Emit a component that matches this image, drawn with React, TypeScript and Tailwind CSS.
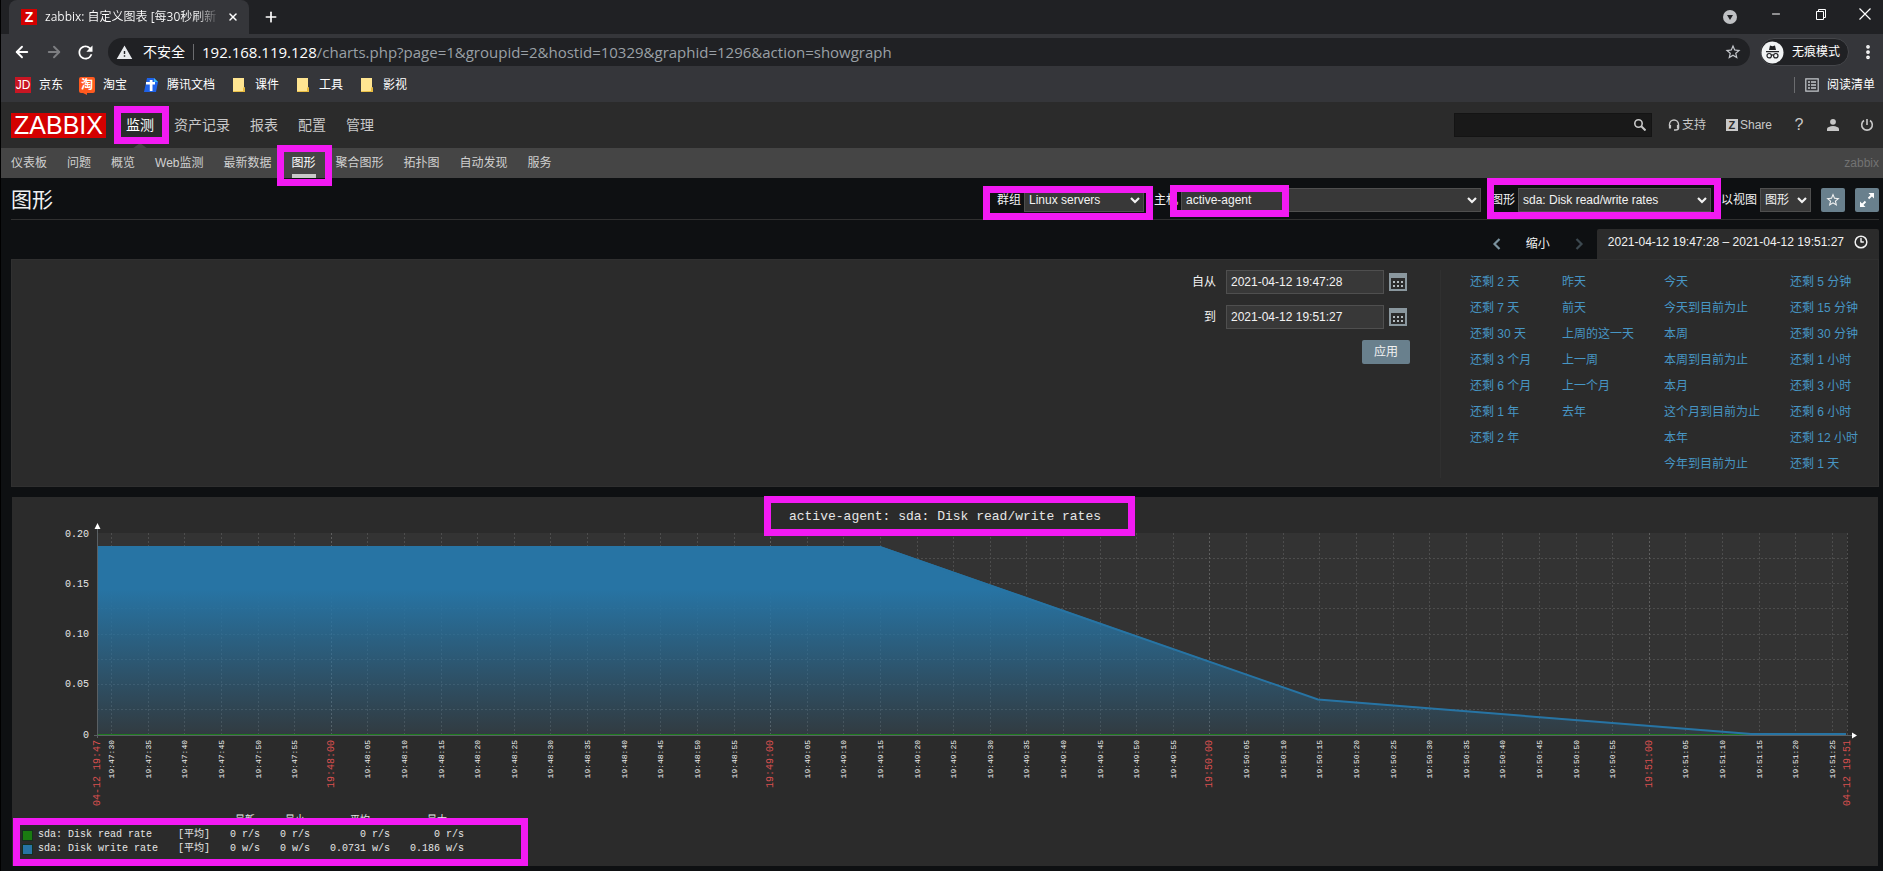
import { ArrowLeft, ArrowRight, Clock3, Minus, MoreVertical, Plus, X } from "lucide-react";
import { MdRefresh, MdStarBorder, MdWarning } from "react-icons/md";

const uiFont = "font-['Open_Sans','Noto_Sans_CJK_SC',sans-serif]";
const pageFont = "font-['Liberation_Sans','Noto_Sans_CJK_SC',sans-serif]";
const chartFont = "font-['Liberation_Mono','Noto_Sans_CJK_SC',monospace]";

const mainMenu = ["监测", "资产记录", "报表", "配置", "管理"];

const subMenu = [
  "仪表板",
  "问题",
  "概览",
  "Web监测",
  "最新数据",
  "图形",
  "聚合图形",
  "拓扑图",
  "自动发现",
  "服务",
];

const ranges = [
  {
    width: "w-[92px]",
    items: ["还剩 2 天", "还剩 7 天", "还剩 30 天", "还剩 3 个月", "还剩 6 个月", "还剩 1 年", "还剩 2 年"],
  },
  {
    width: "w-[102px]",
    items: ["昨天", "前天", "上周的这一天", "上一周", "上一个月", "去年"],
  },
  {
    width: "w-[126px]",
    items: ["今天", "今天到目前为止", "本周", "本周到目前为止", "本月", "这个月到目前为止", "本年", "今年到目前为止"],
  },
  {
    width: "w-[68px]",
    items: ["还剩 5 分钟", "还剩 15 分钟", "还剩 30 分钟", "还剩 1 小时", "还剩 3 小时", "还剩 6 小时", "还剩 12 小时", "还剩 1 天"],
  },
];

// highlight frame drawn over the page
function Mark({ className }: { className: string }) {
  return (
    <span
      aria-hidden="true"
      className={`pointer-events-none absolute z-10 border-[7px] border-[#f31af3] ${className}`}
    />
  );
}

function Folder() {
  return (
    <svg className="h-[14px] w-3" viewBox="0 0 12 14">
      <path d="M0 0h11v9l1 1v4H0z" fill="#ffe591" />
      <path d="M0 13.200V14h12v-4.500h-2V13z" fill="#e8bb3e" />
    </svg>
  );
}

function Chevron({ className, d }: { className: string; d: string }) {
  return (
    <svg className={className} viewBox="0 0 10 12" fill="none" stroke="currentColor" strokeWidth="2.200">
      <path d={d} />
    </svg>
  );
}

function TabStrip() {
  return (
    <div className="flex h-[34px] items-center justify-between bg-[#202124] pl-2 text-white">
      <div className="flex h-full items-center">
        <div className="flex h-full w-60 items-center rounded-t-lg bg-[#35363a] pl-3">
          <span className="flex size-4 shrink-0 items-center justify-center bg-[#d40000] font-['Liberation_Sans',sans-serif] text-sm font-bold leading-4">
            Z
          </span>
          <span className="ml-2 w-[176px] overflow-hidden whitespace-nowrap bg-linear-to-r from-white from-85% to-transparent bg-clip-text text-xs text-transparent">
            zabbix: 自定义图表 [每30秒刷新
          </span>
          <button aria-label="关闭标签页" className="ml-1.5">
            <X className="size-3" strokeWidth={3} />
          </button>
        </div>
        <button aria-label="新标签页" className="ml-3.5">
          <Plus className="size-4" strokeWidth={2.5} />
        </button>
      </div>
      <div className="flex h-full items-start gap-8 pr-3 pt-2">
        <svg className="mt-0.5 size-3.5" viewBox="0 0 14 14">
          <circle cx="7" cy="7" r="7" fill="#bfc1c4" />
          <path d="M4 5h6l-3 5z" fill="#202124" />
        </svg>
        <button aria-label="最小化">
          <Minus className="h-3 w-3.5" strokeWidth={2} />
        </button>
        <button aria-label="还原">
          <svg className="size-3" viewBox="0 0 12 12" fill="none" stroke="#fff">
            <path d="M1.500 3.500h7v8h-7zM3.500 3V1.500h7v8H9" />
          </svg>
        </button>
        <button aria-label="关闭">
          <svg className="size-3" viewBox="0 0 12 12" fill="none" stroke="#fff" strokeWidth="1.200">
            <path d="M.5.5l11 11M11.500.5l-11 11" />
          </svg>
        </button>
      </div>
    </div>
  );
}

function AddressBar() {
  return (
    <div className="flex items-center py-1 pl-3 pr-1.5 text-white">
      <button aria-label="后退">
        <ArrowLeft className="size-[18px]" strokeWidth={2.5} />
      </button>
      <button aria-label="前进" className="ml-3.5 text-[#7d7e81]">
        <ArrowRight className="size-[18px]" strokeWidth={2.5} />
      </button>
      <button aria-label="刷新" className="ml-3">
        <MdRefresh className="size-[21px]" />
      </button>
      <div className="ml-3 flex h-7 grow items-center rounded-full bg-[#202124] pl-2 pr-2">
        <MdWarning className="size-[17px] text-[#e8eaed]" />
        <span className="ml-2.5 text-sm leading-5">不安全</span>
        <span className="ml-2 h-4 w-px bg-[#6b6c6f]" />
        <span className="ml-2 grow text-[15px] leading-5 text-[#9aa0a6]">
          <span className="text-white">192.168.119.128</span>
          /charts.php?page=1&amp;groupid=2&amp;hostid=10329&amp;graphid=1296&amp;action=showgraph
        </span>
        <button aria-label="收藏" className="text-[#c4c7cc]">
          <MdStarBorder className="size-[18px]" />
        </button>
      </div>
      <div className="ml-2.5 flex h-7 items-center rounded-full border border-[#45464a] bg-[#202124] pr-2">
        <svg className="size-[23px]" viewBox="0 0 23 23">
          <circle cx="11.5" cy="11.5" r="11" fill="#f1f3f4" />
          <path d="M8 9l1-4.500 2.500.7 2.500-.7 1 4.500zM5 10h13v1.200H5z" fill="#202124" />
          <g fill="none" stroke="#202124" strokeWidth="1.200">
            <circle cx="8.200" cy="14.700" r="2.200" />
            <circle cx="14.800" cy="14.700" r="2.200" />
            <path d="M10.400 14.200q1.100-.8 2.200 0" />
          </g>
        </svg>
        <span className="ml-2 text-xs">无痕模式</span>
      </div>
      <button aria-label="菜单" className="ml-2.5">
        <MoreVertical className="size-[18px]" strokeWidth={3} />
      </button>
    </div>
  );
}

function Bookmarks() {
  return (
    <div className="flex h-8 items-center justify-between pb-0.5 pl-3.5 pr-2 text-xs text-white">
      <div className="flex items-center gap-4">
        <a href="#jd" className="flex items-center gap-2">
          <span className="flex size-4 items-center justify-center bg-[#c81623] font-['Liberation_Sans',sans-serif]">
            JD
          </span>
          京东
        </a>
        <a href="#taobao" className="flex items-center gap-2">
          <span className="relative flex size-4 items-center justify-center rounded-xs bg-[#ff5a1f] font-bold">
            淘
            <span className="absolute left-1 top-full border-l-4 border-t-2 border-l-transparent border-t-[#ff5a1f]" />
          </span>
          淘宝
        </a>
        <a href="#docs" className="flex items-center gap-2">
          <svg className="size-4" viewBox="0 0 16 16">
            <path d="M4 1h7l4 4-2 10H1z" fill="#1f62e8" />
            <path d="M11 1l4 4h-4z" fill="#3fb8f5" />
            <path d="M3 5h9v2.500H9.500V14H6.800V7.500H3zM6.800 3h2.700v3H6.800z" fill="#fff" />
          </svg>
          腾讯文档
        </a>
        {["课件", "工具", "影视"].map((name) => (
          <a key={name} href="#folder" className="flex items-center gap-2.5 pl-0.5">
            <Folder />
            {name}
          </a>
        ))}
      </div>
      <a href="#reading" className="flex items-center">
        <span className="h-4 w-px bg-[#6b6c6f]" />
        <svg className="ml-2.5 size-3.5" viewBox="0 0 14 14" fill="none" stroke="#c4c7cc" strokeWidth="1.200">
          <path d="M.8.8h12.400v12.400H.8z" />
          <path d="M3 4h2M6 4h5M3 7h2M6 7h5M3 10h2M6 10h5" strokeWidth="1.500" />
        </svg>
        <span className="ml-2">阅读清单</span>
      </a>
    </div>
  );
}

function Header() {
  return (
    <header>
      <div className="flex h-[46px] items-center justify-between bg-[#2b2b2b] pl-2.5 pr-[9px] text-[#c8c8c8]">
        <div className="flex items-center">
          <a
            href="#home"
            className="flex h-[25px] w-[95px] items-center justify-center bg-[#d40000] text-[25px] leading-none text-white"
          >
            ZABBIX
          </a>
          <ul className="ml-5 flex gap-5 text-sm leading-5">
            {mainMenu.map((item, i) => (
              <li key={item} className="relative">
                <a href="#menu" className={i === 0 ? "text-white" : ""}>
                  {item}
                </a>
                {i === 0 && (
                  <>
                    <span className="absolute left-1.5 top-7 border-x-8 border-b-[6px] border-x-transparent border-b-[#454545]" />
                    <Mark className="-left-3 -top-[9px] h-[38px] w-[55px]" />
                  </>
                )}
              </li>
            ))}
          </ul>
        </div>
        <div className="flex items-center gap-4 text-xs">
          <div className="relative">
            <input
              aria-label="搜索"
              className="block h-6 w-[198px] border border-[#141414] bg-[#191919] px-2 text-xs outline-none"
            />
            <svg
              className="absolute right-1.5 top-1.5 size-3"
              viewBox="0 0 12 12"
              fill="none"
              stroke="currentColor"
              strokeWidth="1.600"
            >
              <circle cx="4.500" cy="4.500" r="3.700" />
              <path d="M7.300 7.300l4.200 4.200" strokeWidth="2" />
            </svg>
          </div>
          <div className="flex items-center gap-5">
            <a href="#support" className="flex items-center gap-0.5">
              <svg className="size-3" viewBox="0 0 12 12" fill="none" stroke="currentColor" strokeWidth="1.400">
                <path d="M1.500 6.500V5.500a4.500 4.500 0 0 1 9 0V9q0 2-3 2H6" />
                <path d="M2 6v3.500M10 6v3.500" strokeWidth="2.200" />
              </svg>
              支持
            </a>
            <a href="#share" className="flex items-center gap-0.5">
              <span className="flex size-3 items-center justify-center bg-[#c8c8c8] text-[11px] font-bold leading-3 text-[#2b2b2b]">
                Z
              </span>
              Share
            </a>
            <a href="#help" className="w-3.5 text-center text-base leading-5">
              ?
            </a>
            <a href="#profile" aria-label="用户">
              <svg className="size-3.5" viewBox="0 0 14 14" fill="currentColor">
                <circle cx="7" cy="3.800" r="2.900" />
                <path d="M1 13v-2.500q1-2 6-2.500q5 .5 6 2.500V13z" />
              </svg>
            </a>
            <a href="#logout" aria-label="登出">
              <svg className="size-3.5" viewBox="0 0 14 14" fill="none" stroke="currentColor" strokeWidth="1.600">
                <path d="M4 2.500a5.300 5.300 0 1 0 6 0M7 1v6" />
              </svg>
            </a>
          </div>
        </div>
      </div>
      <nav className="flex h-[30px] items-center justify-between bg-[#454545] pl-2.5 pr-1 text-xs text-[#d0d0d0]">
        <ul className="flex h-full gap-5">
          {subMenu.map((item) => (
            <li key={item} className="relative h-full">
              <a
                href="#sub"
                className={`block h-full leading-[30px] ${item === "图形" ? "border-b-4 border-[#c8c8c8] text-white" : ""}`}
              >
                {item}
              </a>
              {item === "图形" && <Mark className="-left-[15px] -top-[3px] h-[41px] w-[55px]" />}
            </li>
          ))}
        </ul>
        <span className="text-[#737373]">zabbix</span>
      </nav>
    </header>
  );
}

type PickerProps = {
  id: string;
  label: string;
  value: string;
  width: string;
  mark?: string;
};

function Picker({ id, label, value, width, mark }: PickerProps) {
  return (
    <div className="relative flex items-center gap-[3px]">
      <label htmlFor={id}>{label}</label>
      <div className="relative">
        <select
          id={id}
          className={`block h-6 appearance-none border border-[#4f4f4f] bg-[#383838] px-1 text-xs text-[#f2f2f2] ${width}`}
        >
          <option>{value}</option>
        </select>
        <Chevron className="pointer-events-none absolute right-1 top-1.5 h-3 w-2.5" d="M1 4l4 4 4-4" />
      </div>
      {mark && <Mark className={mark} />}
    </div>
  );
}

function TitleBar() {
  return (
    <div className="flex items-center justify-between border-b border-[#303030] pb-[7px] pt-2.5">
      <h1 className="text-[21px] leading-6">图形</h1>
      <form className="flex items-center gap-2.5 text-xs">
        <Picker id="group" label="群组" value="Linux servers" width="w-[120px]" mark="-left-3.5 -top-0.5 h-[34px] w-[170px]" />
        <Picker id="host" label="主机" value="active-agent" width="w-[300px]" mark="left-4 -top-[3px] h-8 w-[119px]" />
        <Picker id="graph" label="图形" value="sda: Disk read/write rates" width="w-[193px]" mark="-left-1 -top-2.5 h-[41px] w-[234px]" />
        <Picker id="view" label="以视图" value="图形" width="w-[51px]" />
        <button type="button" aria-label="收藏" className="flex size-6 items-center justify-center rounded-xs bg-[#69808d]">
          <MdStarBorder className="size-4" />
        </button>
        <button type="button" aria-label="全屏" className="flex size-6 items-center justify-center rounded-xs bg-[#69808d]">
          <svg className="size-3.5" viewBox="0 0 14 14" fill="#fff" stroke="#fff">
            <path d="M8.500 0H14v5.500zM0 8.500V14h5.500z" stroke="none" />
            <path d="M12 2L8.500 5.500M2 12l3.500-3.500" strokeWidth="1.800" />
          </svg>
        </button>
      </form>
    </div>
  );
}

function DateField({ id, label, value }: { id: string; label: string; value: string }) {
  return (
    <div className="flex items-center">
      <label htmlFor={id}>{label}</label>
      <input
        id={id}
        defaultValue={value}
        className="ml-2.5 h-6 w-[158px] border border-[#4f4f4f] bg-[#383838] px-1 text-xs text-[#f2f2f2]"
      />
      <button type="button" aria-label="日历" className="flex w-[26px] justify-center pl-0.5">
        <svg className="size-[18px]" viewBox="0 0 18 18">
          <path d="M1 1h16v16H1z" fill="none" stroke="#8a979e" strokeWidth="2" />
          <path d="M1 1h16v4H1z" fill="#8a979e" />
          <path
            d="M4 8h2v2H4zM8 8h2v2H8zM12 8h2v2h-2zM4 12h2v2H4zM8 12h2v2H8zM12 12h2v2h-2z"
            fill="#b4bcc0"
          />
        </svg>
      </button>
    </div>
  );
}

function TimeSelector() {
  return (
    <section className="mt-[9px] text-xs">
      <div className="flex items-center justify-end">
        <button aria-label="向前" className="text-[#7a929e]">
          <Chevron className="h-3 w-2.5" d="M7.500 1L2.500 6l5 5" />
        </button>
        <button className="mx-6 leading-7">缩小</button>
        <button aria-label="向后" className="text-[#3c484f]">
          <Chevron className="h-3 w-2.5" d="M2.500 1l5 5-5 5" />
        </button>
        <button className="ml-[13px] flex h-[30px] items-center gap-2.5 rounded-t-xs bg-[#2b2b2b] px-[11px] pb-1">
          2021-04-12 19:47:28 – 2021-04-12 19:51:27
          <Clock3 className="size-3.5" strokeWidth={2.5} />
        </button>
      </div>
      <div className="flex justify-end border border-[#303030] bg-[#2b2b2b] pb-2 pr-5 pt-2.5">
        <form className="mr-[30px] flex flex-col items-end gap-[11px]">
          <DateField id="from" label="自从" value="2021-04-12 19:47:28" />
          <DateField id="to" label="到" value="2021-04-12 19:51:27" />
          <button type="button" className="h-6 w-12 rounded-xs bg-[#69808d]">
            应用
          </button>
        </form>
        <div className="flex border-l border-[#303030] pl-[29px] text-[#4796c4]">
          {ranges.map((col) => (
            <ul key={col.width} className={col.width}>
              {col.items.map((item) => (
                <li key={item} className="h-[26px] whitespace-nowrap leading-6">
                  <a href="#range">{item}</a>
                </li>
              ))}
            </ul>
          ))}
        </div>
      </div>
    </section>
  );
}

const LEFT = 85;
const RIGHT = 1835;
const TOP = 36;
const BOTTOM = 238;
const START = 28; // seconds after 19:47:00
const SPAN = 239;

const ticks = Array.from({ length: 48 }, (_, i) => {
  const sec = 30 + i * 5;
  const pad = (n: number) => String(n).padStart(2, "0");
  return {
    x: Math.floor(LEFT + ((sec - START) * (RIGHT - LEFT)) / SPAN),
    label: `19:${pad(47 + Math.floor(sec / 60))}:${pad(sec % 60)}`,
    minute: sec % 60 === 0,
  };
});

function AxisLabel({ x, label, red }: { x: number; label: string; red?: boolean }) {
  return (
    <text
      transform={`translate(${x + 3} 243) rotate(-90)`}
      textAnchor="end"
      fontSize={red ? 10 : 8}
      fill={red ? "#d9504f" : "#f0f0f0"}
    >
      {label}
    </text>
  );
}

function Chart() {
  return (
    <svg viewBox="0 0 1866 316" className={`block h-auto w-full ${chartFont}`}>
      <defs>
        <linearGradient id="fade" gradientUnits="userSpaceOnUse" x1="0" y1="92" x2="0" y2={BOTTOM}>
          <stop offset="0" stopColor="#2774a4" />
          <stop offset="1" stopColor="#2774a4" stopOpacity="0.12" />
        </linearGradient>
      </defs>

      <rect x={LEFT} y={TOP} width={RIGHT - LEFT} height={BOTTOM - TOP} fill="#333333" />
      <g stroke="#4d4d4d" strokeDasharray="2 2" shapeRendering="crispEdges">
        {[61, 86, 111, 137, 162, 187, 212].map((y) => (
          <path key={y} d={`M${LEFT} ${y}.5H${RIGHT}`} />
        ))}
        {ticks.map((t) => (
          <path key={t.label} d={`M${t.x}.5 ${TOP}V${BOTTOM}`} stroke={t.minute ? "#5e5e5e" : "#4d4d4d"} />
        ))}
        <path d={`M${RIGHT}.5 ${TOP}V${BOTTOM}`} />
      </g>

      <path d="M85 49H868L1306 202L1739 236H1834V238H85Z" fill="url(#fade)" />
      <path d="M85 237.500H1739" stroke="#1f7a1f" />
      <path d="M85 50H868L1306 202.500L1739 237H1834" fill="none" stroke="#2774a4" strokeWidth="2" />

      <path d="M85.500 28V241M82 238.500H1840" stroke="#5a6064" fill="none" />
      <path d="M82.500 32L85.500 26L88.500 32zM1840 235.500L1845 238.500L1840 241.500z" fill="#fff" />

      <text x="933" y="23" textAnchor="middle" fontSize="13" fill="#e6e6e6">
        active-agent: sda: Disk read/write rates
      </text>
      {["0.20", "0.15", "0.10", "0.05", "0"].map((v, i) => (
        <text key={v} x="77" y={v === "0" ? 241 : 40 + i * 50} textAnchor="end" fontSize="10" fill="#e6e6e6">
          {v}
        </text>
      ))}
      <AxisLabel x={85} label="04-12 19:47" red />
      {ticks.map((t) => (
        <AxisLabel key={t.label} x={t.x} label={t.label} red={t.minute} />
      ))}
      <AxisLabel x={1835} label="04-12 19:51" red />
    </svg>
  );
}

const legend = [
  { name: "sda: Disk read rate", color: "bg-[#1a7c11]", values: ["0 r/s", "0 r/s", "0 r/s", "0 r/s"] },
  { name: "sda: Disk write rate", color: "bg-[#2774a4]", values: ["0 w/s", "0 w/s", "0.0731 w/s", "0.186 w/s"] },
];

function Legend() {
  return (
    <div className="relative flex pb-2.5 pl-2.5 pt-px">
      <table className={`text-[10px] leading-[14px] text-[#e6e6e6] ${chartFont}`}>
        <thead>
          <tr className="h-[14px]">
            <th />
            <th />
            {["最新", "最小", "平均", "最大"].map((h) => (
              <th key={h} className="pl-5 font-normal">
                {h}
              </th>
            ))}
          </tr>
        </thead>
        <tbody>
          {legend.map((row) => (
            <tr key={row.name} className="h-[14px] whitespace-nowrap">
              <td>
                <span className="flex items-center gap-[5px]">
                  <span className={`size-[11px] border border-[#14301f] ${row.color}`} />
                  {row.name}
                </span>
              </td>
              <td className="pl-5">[平均]</td>
              {row.values.map((v, i) => (
                <td key={i} className="pl-5 text-right">
                  {v}
                </td>
              ))}
            </tr>
          ))}
        </tbody>
      </table>
      <Mark className="bottom-0 left-px h-12 w-[515px]" />
    </div>
  );
}

export default function App() {
  return (
    <div className={`min-h-screen border-l border-black bg-[#0e1012] text-[#f2f2f2] ${pageFont}`}>
      <div className={`bg-[#35363a] ${uiFont}`}>
        <TabStrip />
        <AddressBar />
        <Bookmarks />
      </div>
      <Header />
      <main className="pb-[5px] pl-2.5 pr-1">
        <TitleBar />
        <TimeSelector />
        <section className="relative mx-px mt-2.5 bg-[#2b2b2b]">
          <Chart />
          <Mark className="-top-px left-1/2 -ml-[181px] h-10 w-[371px]" />
          <Legend />
        </section>
      </main>
    </div>
  );
}
